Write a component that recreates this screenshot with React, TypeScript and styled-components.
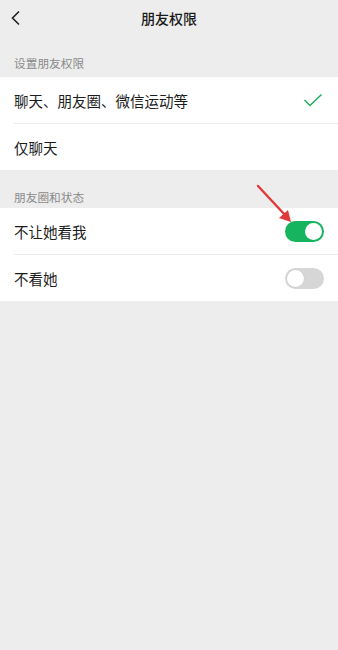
import React from "react";
import styled, { createGlobalStyle } from "styled-components";

const Global = createGlobalStyle`
  html, body { margin: 0; padding: 0; background: #ededed; }
  body { font-family: "Noto Sans CJK SC", "Noto Sans", sans-serif; }
`;

const Page = styled.div`
  position: relative;
  width: 338px;
  min-height: 650px;
  background: #ededed;
`;

const Header = styled.div`
  height: 36px;
  display: grid;
  grid-template-columns: 40px 1fr 40px;
  align-items: center;
`;

const Back = styled.div`
  display: flex;
  align-items: center;
  padding-left: 10px;
`;

const Title = styled.div`
  text-align: center;
  font-size: 14px;
  font-weight: 500;
  color: #1a1a1a;
`;

const GroupLabel = styled.div<{ $top: number; $bottom: number }>`
  padding: ${(p) => p.$top}px 14px ${(p) => p.$bottom}px;
  font-size: 11.7px;
  line-height: 13px;
  color: #8a8a8a;
`;

const Section = styled.div`
  background: #fff;
  display: flex;
  flex-direction: column;
`;

const Row = styled.div<{ $divider?: boolean }>`
  height: 46px;
  display: flex;
  align-items: center;
  justify-content: space-between;
  padding: 0 14px;
  position: relative;
  border-top: ${(p) => (p.$divider ? "1px solid #ececec" : "none")};
  margin-left: ${(p) => (p.$divider ? "14px" : "0")};
  padding-left: ${(p) => (p.$divider ? "0" : "14px")};
`;

const Label = styled.span`
  font-size: 14.5px;
  color: #1c1c1c;
`;

const Track = styled.div<{ $on: boolean }>`
  width: 39px;
  height: 21px;
  border-radius: 11px;
  box-sizing: border-box;
  background: ${(p) => (p.$on ? "#16b45e" : "#d6d6d6")};
  display: flex;
  align-items: center;
  justify-content: ${(p) => (p.$on ? "flex-end" : "flex-start")};
  padding: 2px;
`;

const Knob = styled.div<{ $on: boolean }>`
  width: 17px;
  height: 17px;
  border-radius: 50%;
  background: #fff;
  box-shadow: ${(p) => (p.$on ? "none" : "0 0 0 0.5px #c8c8c8")};
`;

const Arrow = styled.svg`
  position: absolute;
  left: 252px;
  top: 182px;
`;

const Toggle = ({ on }: { on: boolean }) => (
  <Track $on={on}>
    <Knob $on={on} />
  </Track>
);

export default function App() {
  return (
    <Page>
      <Global />
      <Header>
        <Back>
          <svg width="12" height="16" viewBox="0 0 12 16">
            <path d="M9 1.5 L2.5 8 L9 14.5" fill="none" stroke="#222" strokeWidth="1.6" />
          </svg>
        </Back>
        <Title>朋友权限</Title>
        <div />
      </Header>
      <GroupLabel $top={20} $bottom={8}>设置朋友权限</GroupLabel>
      <Section>
        <Row>
          <Label>聊天、朋友圈、微信运动等</Label>
          <svg width="20" height="14" viewBox="0 0 20 14" style={{ marginRight: 1 }}>
            <path d="M1.5 7 L7 12.5 L18.5 1.5" fill="none" stroke="#1fae5f" strokeWidth="1.5" />
          </svg>
        </Row>
        <Row $divider>
          <Label>仅聊天</Label>
        </Row>
      </Section>
      <GroupLabel $top={20} $bottom={5}>朋友圈和状态</GroupLabel>
      <Section>
        <Row>
          <Label>不让她看我</Label>
          <Toggle on />
        </Row>
        <Row $divider>
          <Label>不看她</Label>
          <Toggle on={false} />
        </Row>
      </Section>
      <Arrow width="44" height="44" viewBox="0 0 44 44">
        <path d="M6 4 L34 34" stroke="#e0393a" strokeWidth="2.4" strokeLinecap="round" />
        <path d="M39 40 L27 36 L36 28 Z" fill="#e0393a" />
      </Arrow>
    </Page>
  );
}
